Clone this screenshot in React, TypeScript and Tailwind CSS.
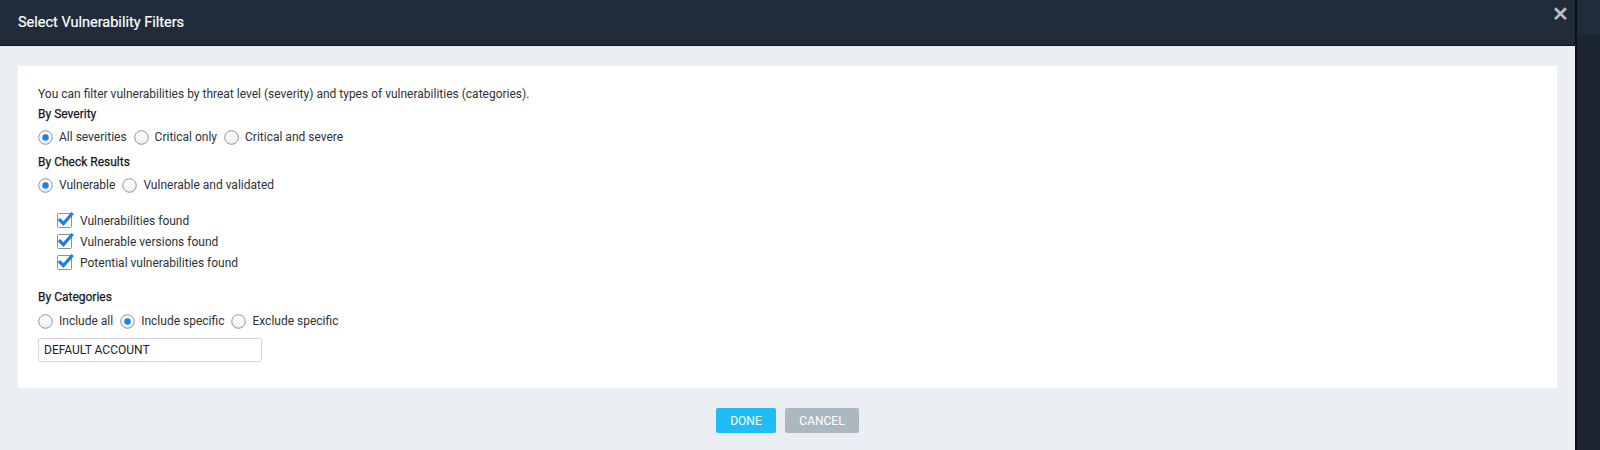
import { useState } from "react";

const FONT = "font-['Roboto','Liberation_Sans',sans-serif]";

function Radio({ on }: { on: boolean }) {
  return (
    <svg width="15" height="15" viewBox="0 0 15 15" className="shrink-0">
      <defs>
        <linearGradient id="rg" x1="0" y1="0" x2="0" y2="1">
          <stop offset="0" stopColor="#ffffff" />
          <stop offset="1" stopColor="#eceef1" />
        </linearGradient>
      </defs>
      <circle cx="7.5" cy="7.5" r="6.8" fill="url(#rg)" stroke="#8f949a" strokeWidth="1" />
      {on ? <circle cx="7.5" cy="7.5" r="3.2" fill="#1a7fe6" /> : null}
    </svg>
  );
}

function Check() {
  return (
    <svg width="18" height="17" viewBox="0 0 18 17" className="shrink-0 -mt-[2px]">
      <rect x="0.5" y="2.5" width="14" height="14" rx="1" fill="#ffffff" stroke="#8d9196" />
      <path d="M3 9.2 L6.4 12.6 L14.6 3.2" fill="none" stroke="#1f7ee0" strokeWidth="3.2" strokeLinecap="square" />
    </svg>
  );
}

function RadioGroup({ options, value, onPick }: { options: string[]; value: number; onPick: (i: number) => void }) {
  return (
    <div className="flex h-[26px] items-center">
      {options.map((o, i) => (
        <button key={o} onClick={() => onPick(i)} className="mr-[7px] flex items-center gap-[6px]">
          <Radio on={value === i} />
          <span>{o}</span>
        </button>
      ))}
    </div>
  );
}

export default function App() {
  const [sev, setSev] = useState(0);
  const [res, setRes] = useState(0);
  const [cat, setCat] = useState(1);

  return (
    <div className={`${FONT} flex h-[450px] w-full overflow-hidden`}>
      <div className="flex w-[1577px] shrink-0 flex-col border-r-2 border-[#0c1117] bg-[#ebeef3]">
        <header className="relative flex h-[46px] shrink-0 items-center border-b border-[#0d141c] bg-[#202c3a] pl-[18px]">
          <h1 className="text-[14.5px] text-white [-webkit-text-stroke:0.2px_white]">Select Vulnerability Filters</h1>
          <button className="absolute right-[6px] top-[4px] text-[20px] font-bold leading-none text-[#b9bdc2]">
            ✕
          </button>
        </header>

        <div className="mx-[18px] mt-[20px] bg-white px-[20px] pb-[26px] pt-[18px] text-[12px] text-[#2e3236]">
          <p className="flex h-5 items-center">
            You can filter vulnerabilities by threat level (severity) and types of vulnerabilities (categories).
          </p>
          <div className="flex h-5 items-center text-[#15191d] [-webkit-text-stroke:0.25px_#15191d]">By Severity</div>
          <RadioGroup options={["All severities", "Critical only", "Critical and severe"]} value={sev} onPick={setSev} />

          <div className="mt-[2px] flex h-5 items-center text-[#15191d] [-webkit-text-stroke:0.25px_#15191d]">By Check Results</div>
          <RadioGroup options={["Vulnerable", "Vulnerable and validated"]} value={res} onPick={setRes} />

          <ul className="mt-[12px] pl-[19px]">
            {["Vulnerabilities found", "Vulnerable versions found", "Potential vulnerabilities found"].map((t) => (
              <li key={t} className="flex h-[21px] items-center gap-[5px]">
                <Check />
                <span>{t}</span>
              </li>
            ))}
          </ul>

          <div className="mt-[14px] flex h-5 items-center text-[#15191d] [-webkit-text-stroke:0.25px_#15191d]">By Categories</div>
          <div className="mt-px">
            <RadioGroup options={["Include all", "Include specific", "Exclude specific"]} value={cat} onPick={setCat} />
          </div>
          <input
            defaultValue="DEFAULT ACCOUNT"
            className="mt-[4px] h-6 w-[224px] rounded-[3px] border border-[#d3d6da] px-[5px] text-[12px] text-[#222] outline-none"
          />
        </div>

        <div className="mt-[20px] flex justify-center gap-[9px]">
          <button className="h-[25px] w-[60px] rounded-[2px] bg-[#1ebcf8] text-[12px] text-white">DONE</button>
          <button className="h-[25px] w-[74px] rounded-[2px] bg-[#adb7c0] text-[12px] text-white">CANCEL</button>
        </div>
      </div>
      <div className="flex flex-1 flex-col">
        <div className="h-[35px] bg-[#1f2d3b]" />
        <div className="flex-1 bg-[#1b2430]" />
      </div>
    </div>
  );
}
